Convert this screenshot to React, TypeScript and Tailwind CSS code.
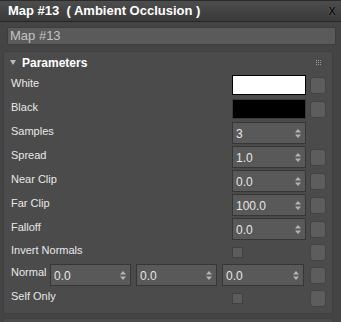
import React from 'react';

const font = { fontFamily: '"Liberation Sans", Arial, sans-serif' };

function SmallButton() {
  return <div className="w-[16px] h-[17px] rounded-[3px] bg-[#5d5d5d] border border-[#434343] shrink-0" />;
}

function Spinner({ value, w = 'w-[74px]' }: { value: string; w?: string }) {
  return (
    <div className={`${w} h-[22px] bg-[#595959] border border-[#363636] flex items-center justify-between pl-[3px] pr-[4px] shrink-0`}>
      <span className="text-[12px] text-[#e6e6e6] pt-[2px]">{value}</span>
      <svg width="6" height="9" viewBox="0 0 6 9" className="shrink-0">
        <path d="M3 0 L6 3.5 H0 Z" fill="#b4b4b4" />
        <path d="M3 9 L6 5.5 H0 Z" fill="#b4b4b4" />
      </svg>
    </div>
  );
}

function Checkbox() {
  return <div className="w-[11px] h-[11px] bg-[#5c5c5c] border border-[#404040] shrink-0" />;
}

function Row({ label, h = 'h-[24px]', children, button = true }: { label: string; h?: string; children: React.ReactNode; button?: boolean }) {
  return (
    <div className={`${h} flex items-center`}>
      <span className="flex-1 text-[11px] text-[#e8e8e8] pb-[4px]">{label}</span>
      <div className="w-[74px] flex items-center">{children}</div>
      <div className="w-[16px] ml-[4px] flex items-center">{button && <SmallButton />}</div>
    </div>
  );
}

export default function App() {
  return (
    <div className="w-[341px] h-[322px] bg-[#444444] overflow-hidden flex flex-col" style={font}>
      {/* Title bar */}
      <div className="h-[22px] border-t border-[#2a2a2a] border-b border-b-[#262626] bg-gradient-to-b from-[#4c4c4c] to-[#3a3a3a] flex items-center justify-between pl-[8px] pr-[5px]">
        <span className="text-[13px] font-bold text-white whitespace-pre">Map #13  ( Ambient Occlusion )</span>
        <span className="text-[14px] font-black text-[#111111] leading-none pb-[2px]" style={{ textShadow: '0 0 1px #999' }}>x</span>
      </div>

      {/* Name field */}
      <div className="mt-[5px] ml-[7px] mr-[5px] h-[18px] bg-[#5a5a5a] border border-[#3d3d3d] flex items-center px-[2px]">
        <span className="text-[13px] text-[#c4c4c4]">Map #13</span>
      </div>

      {/* Parameters panel */}
      <div className="mt-[6px] ml-[3px] w-[330px] bg-[#4b4b4b] border border-[#3f3f3f] rounded-t-[2px] pb-[3px]">
        <div className="h-[21px] flex items-center pl-[6px] pr-[6px]">
          <svg width="6" height="5" viewBox="0 0 6 5" className="mr-[6px]">
            <path d="M0 0 H6 L3 5 Z" fill="#bcbcbc" />
          </svg>
          <span className="flex-1 text-[12px] font-bold text-white">Parameters</span>
          <div className="grid grid-cols-3 gap-[1px] mr-[5px]">
            {Array.from({ length: 9 }).map((_, i) => (
              <div key={i} className="w-[1px] h-[1px] bg-[#9a9a9a]" />
            ))}
          </div>
        </div>

        <div className="flex flex-col pl-[7px] pr-[6px]">
          <Row label="White">
            <div className="w-[74px] h-[20px] bg-white border border-black" />
          </Row>
          <Row label="Black">
            <div className="w-[74px] h-[20px] bg-black border border-[#3a3a3a]" />
          </Row>
          <Row label="Samples" button={false}>
            <Spinner value="3" />
          </Row>
          <Row label="Spread">
            <Spinner value="1.0" />
          </Row>
          <Row label="Near Clip">
            <Spinner value="0.0" />
          </Row>
          <Row label="Far Clip">
            <Spinner value="100.0" />
          </Row>
          <Row label="Falloff">
            <Spinner value="0.0" />
          </Row>
          <Row label="Invert Normals" h="h-[22px]">
            <Checkbox />
          </Row>
          <div className="h-[24px] flex items-center">
            <span className="w-[39px] text-[11px] text-[#e8e8e8] pb-[6px]">Normal</span>
            <div className="flex gap-[5px]">
              <Spinner value="0.0" w="w-[81px]" />
              <Spinner value="0.0" w="w-[81px]" />
              <Spinner value="0.0" w="w-[82px]" />
            </div>
            <div className="w-[16px] ml-[6px] flex items-center">
              <SmallButton />
            </div>
          </div>
          <Row label="Self Only" h="h-[23px]">
            <Checkbox />
          </Row>
        </div>
      </div>

      {/* Next panel edge */}
      <div className="mt-[4px] ml-[3px] w-[330px] flex-1 bg-[#4b4b4b] border-t border-x border-[#3f3f3f]" />
    </div>
  );
}
